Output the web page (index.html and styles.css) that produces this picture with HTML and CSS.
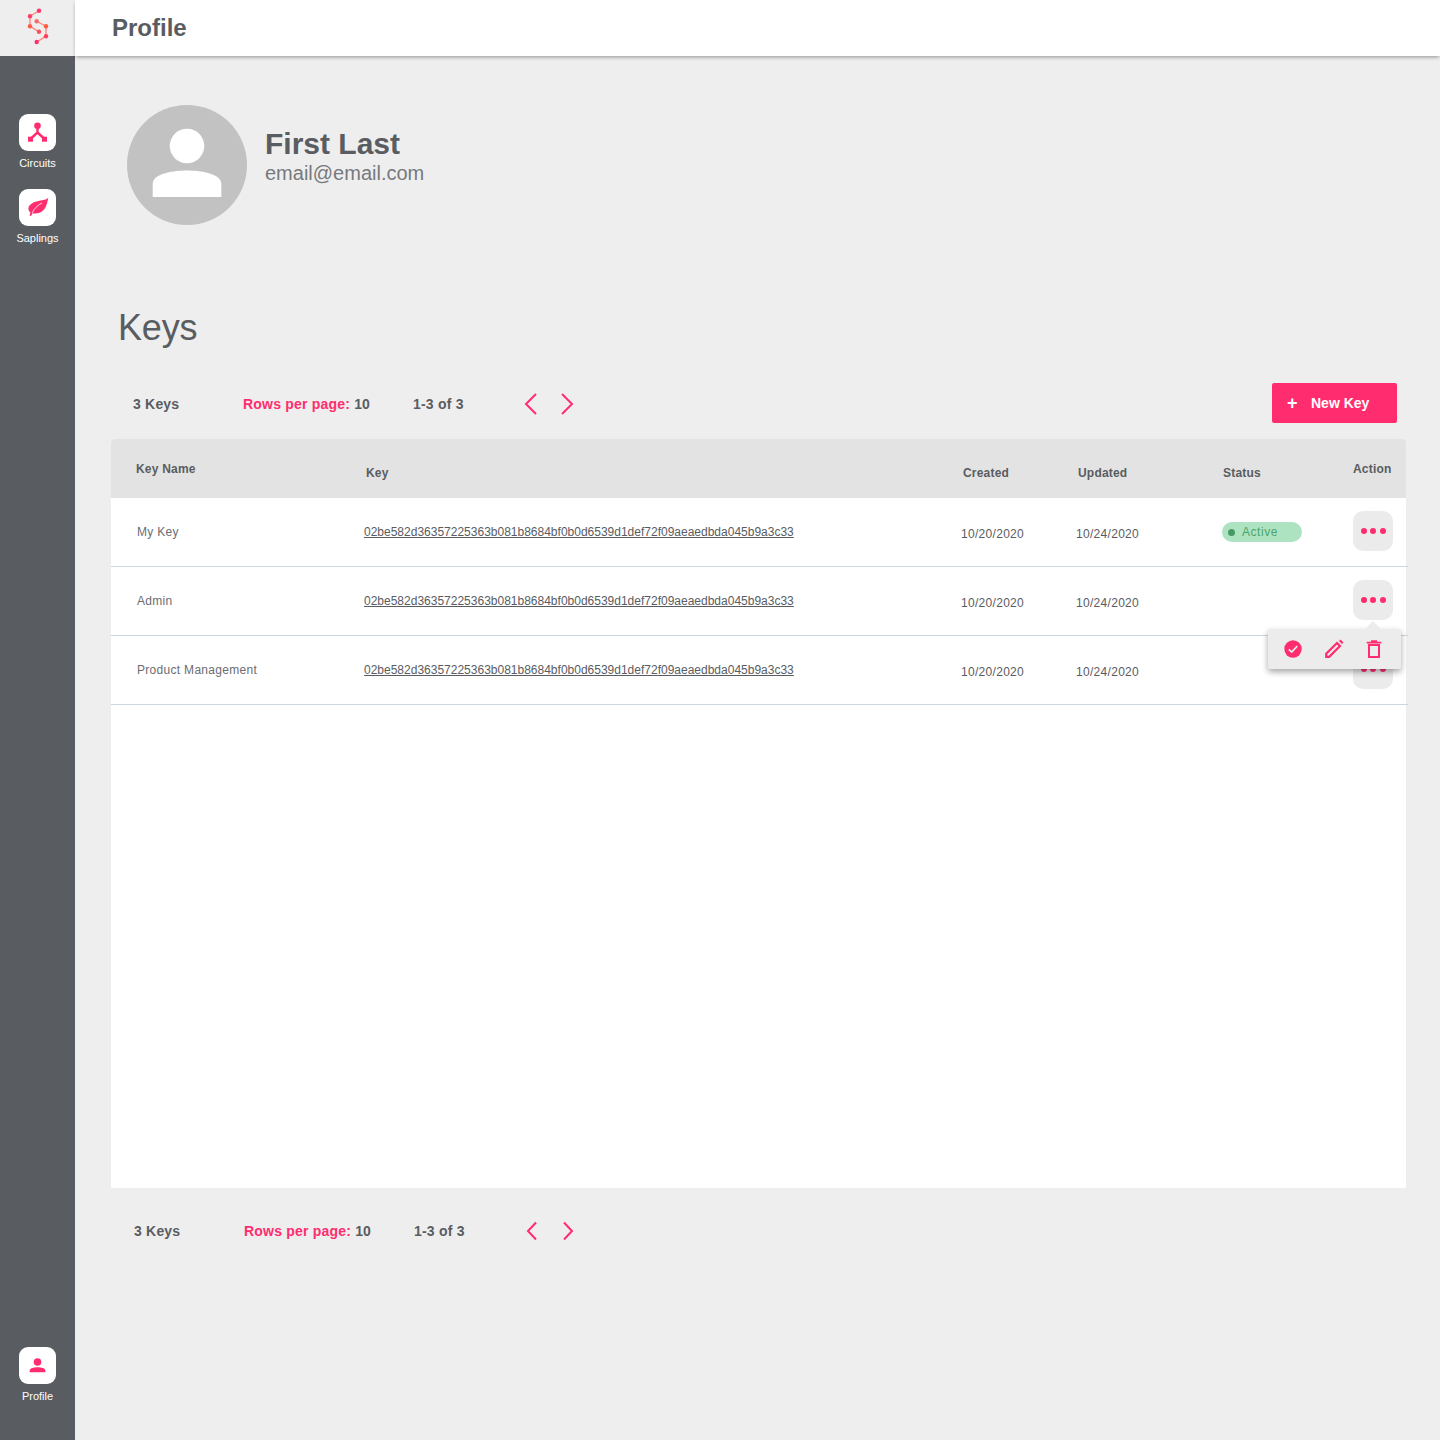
FILE: index.html
```html
<!DOCTYPE html>
<html lang="en">
<head>
<meta charset="utf-8">
<title>Profile</title>
<link rel="stylesheet" href="styles.css">
</head>
<body>
<div class="app">
  <aside class="sidebar">
    <div class="logo">
      <svg width="75" height="56" viewBox="0 0 75 56">
        <path d="M39 10.700 30 16.300v10l9 5.400M36.700 21.300l9.300 5v10l-9.300 5.700" fill="none" stroke="#ff8078" stroke-width="1.300"/>
        <circle cx="39" cy="10.700" r="2.200" fill="#ff3368"/><circle cx="30" cy="16.300" r="2.200" fill="#ff3d64"/><circle cx="30" cy="26.300" r="2.200" fill="#ff5a4a"/><circle cx="39" cy="31.700" r="2.200" fill="#ff4f55"/><circle cx="36.700" cy="21.300" r="2.200" fill="#ff6a68"/><circle cx="46" cy="26.300" r="2.200" fill="#ff5a40"/><circle cx="46" cy="36.300" r="2.200" fill="#ff4058"/><circle cx="36.700" cy="42" r="2.200" fill="#ff2d6f"/>
      </svg>
    </div>
    <nav class="nav">
      <a class="nav-item">
        <span class="nav-icon"><svg width="37" height="37" viewBox="0 0 37 37"><circle cx="18.500" cy="11.800" r="3.300"/><path d="M18.500 13v5.500L12 24.500M18.500 18.500l6.500 6" fill="none" stroke="#ff2d6f" stroke-width="2.400"/><rect x="9" y="22.700" width="5" height="5"/><rect x="23" y="22.700" width="5" height="5"/></svg></span>
        <span class="nav-label">Circuits</span>
      </a>
      <a class="nav-item">
        <span class="nav-icon"><svg width="37" height="37" viewBox="0 0 37 37"><path d="M29.300 8.700C26 12.500 15 10.500 10.500 16.500 8.500 19.300 9.500 22 11.500 23.500L10.500 26.500 12 27 13.500 24.300C17.500 25 22.500 24 25.500 20 28 16.500 28.500 12 29.300 8.700Z"/><path d="M13.300 23.800C15.500 19 19 16 23 14" fill="none" stroke="#fff" stroke-width=".8"/></svg></span>
        <span class="nav-label">Saplings</span>
      </a>
    </nav>
    <a class="nav-item nav-bottom">
      <span class="nav-icon"><svg width="37" height="37" viewBox="0 0 37 37"><circle cx="18.500" cy="15" r="3.800"/><path d="M10.700 25.300v-1.800c0-2 4-3.200 7.800-3.200s7.800 1.200 7.800 3.200v1.800Z"/></svg></span>
      <span class="nav-label">Profile</span>
    </a>
  </aside>

  <div class="body">
    <header class="topbar"><h1 class="page-title">Profile</h1></header>
    <main class="main">
      <section class="profile">
        <div class="avatar">
          <svg width="120" height="120" viewBox="0 0 120 120"><circle cx="60" cy="41" r="17.300" fill="#fff"/><path d="M25.700 92V79c0-11 22-13.500 34.300-13.500S94.300 68 94.300 79v13Z" fill="#fff"/></svg>
        </div>
        <div class="who">
          <div class="who-name">First Last</div>
          <div class="who-mail">email@email.com</div>
        </div>
      </section>

      <h2 class="section-title">Keys</h2>

      <div class="pager pager-top">
        <span class="pg-count">3 Keys</span>
        <span class="pg-rows"><b class="pink">Rows per page:</b> 10</span>
        <span class="pg-range">1-3 of 3</span>
        <span class="pg-arrows">
          <svg width="16" height="24" viewBox="0 0 16 24"><path d="M13 2 3 12l10 10" fill="none" stroke="#ff2d6f" stroke-width="2"/></svg>
          <svg width="16" height="24" viewBox="0 0 16 24"><path d="M3 2l10 10L3 22" fill="none" stroke="#ff2d6f" stroke-width="2"/></svg>
        </span>
        <button class="new-key"><span class="plus">+</span>New Key</button>
      </div>

      <div class="table">
        <div class="row head">
          <div class="th th-name raise">Key Name</div>
          <div class="th th-key">Key</div>
          <div class="th th-date">Created</div>
          <div class="th th-date">Updated</div>
          <div class="th th-status">Status</div>
          <div class="th raise">Action</div>
        </div>
        <div class="row">
          <div class="td name">My Key</div>
          <div class="td key">02be582d36357225363b081b8684bf0b0d6539d1def72f09aeaedbda045b9a3c33</div>
          <div class="td date">10/20/2020</div>
          <div class="td date">10/24/2020</div>
          <div class="td"><span class="badge"><i class="dot"></i>Active</span></div>
          <div class="td"><span class="more"><i></i><i></i><i></i></span></div>
        </div>
        <div class="row">
          <div class="td name">Admin</div>
          <div class="td key">02be582d36357225363b081b8684bf0b0d6539d1def72f09aeaedbda045b9a3c33</div>
          <div class="td date">10/20/2020</div>
          <div class="td date">10/24/2020</div>
          <div class="td"></div>
          <div class="td action-cell">
            <span class="more"><i></i><i></i><i></i></span>
            <div class="popup">
              <svg width="18" height="18" viewBox="0 0 18 18"><circle cx="9" cy="9" r="8.700" fill="#ff2d6f"/><path d="M4.800 9.300 7.700 12l5.500-5.800" fill="none" stroke="#eee" stroke-width="1.700"/></svg>
              <svg width="20" height="20" viewBox="0 0 20 20"><path d="M2.200 17.800v-3L13 4l3 3L5.200 17.800Z" fill="none" stroke="#ff2d6f" stroke-width="2.200"/><path d="m15 2 1.500-1.500 3 3L18 5Z" fill="#ff2d6f"/></svg>
              <svg width="16" height="18" viewBox="0 0 16 18"><path d="M.7 2.700h14.600M5 1h6" fill="none" stroke="#ff2d6f" stroke-width="1.700"/><path d="M3 5h10v12H3Z" fill="none" stroke="#ff2d6f" stroke-width="2"/></svg>
            </div>
          </div>
        </div>
        <div class="row">
          <div class="td name">Product Management</div>
          <div class="td key">02be582d36357225363b081b8684bf0b0d6539d1def72f09aeaedbda045b9a3c33</div>
          <div class="td date">10/20/2020</div>
          <div class="td date">10/24/2020</div>
          <div class="td"></div>
          <div class="td"><span class="more"><i></i><i></i><i></i></span></div>
        </div>
      </div>

      <div class="pager pager-bottom">
        <span class="pg-count">3 Keys</span>
        <span class="pg-rows"><b class="pink">Rows per page:</b> 10</span>
        <span class="pg-range">1-3 of 3</span>
        <span class="pg-arrows">
          <svg width="16" height="24" viewBox="0 0 16 24"><path d="M12 3.500 4 12l8 8.500" fill="none" stroke="#ff2d6f" stroke-width="2"/></svg>
          <svg width="16" height="24" viewBox="0 0 16 24"><path d="M4 3.500l8 8.500-8 8.500" fill="none" stroke="#ff2d6f" stroke-width="2"/></svg>
        </span>
      </div>
    </main>
  </div>
</div>
</body>
</html>
```
FILE: styles.css
```css
* { box-sizing: border-box; }
html, body { margin: 0; padding: 0; }
body { font-family: "Liberation Sans", Arial, sans-serif; color: #595c61; background: #eee; }
.app { display: flex; width: 1440px; height: 1440px; overflow: hidden; }

.sidebar { width: 75px; flex: none; background: #595c61; display: flex; flex-direction: column; align-items: stretch; }
.logo { height: 56px; background: #eee; }
.logo svg { display: block; }
.nav { padding-top: 58px; display: flex; flex-direction: column; gap: 19px; }
.nav-item { display: flex; flex-direction: column; align-items: center; }
.nav-bottom { margin-top: auto; margin-bottom: 37px; }
.nav-icon { width: 37px; height: 37px; background: #fff; border-radius: 9px; display: block; }
.nav-icon svg { display: block; fill: #ff2d6f; }
.nav-label { font-size: 11px; line-height: 13px; margin-top: 6px; color: #fff; }

.body { flex: 1; display: flex; flex-direction: column; min-width: 0; }
.topbar { height: 56px; flex: none; background: #fff; box-shadow: 0 2px 4px -1px rgba(0,0,0,.4); padding-left: 37px; display: flex; align-items: center; position: relative; z-index: 2; }
.page-title { margin: 0; font-size: 24px; font-weight: 700; color: #595c61; }

.main { flex: 1; padding: 49px 34px 0 36px; }
.profile { display: flex; padding-left: 16px; gap: 18px; height: 120px; }
.avatar { width: 120px; height: 120px; border-radius: 50%; background: #c2c2c2; flex: none; }
.avatar svg { display: block; }
.who { padding-top: 22px; }
.who-name { font-size: 30px; line-height: 34px; font-weight: 700; }
.who-mail { font-size: 20px; line-height: 24px; color: #77797d; }

.section-title { margin: 80px 0 0 7px; font-size: 36px; line-height: 46px; font-weight: 400; letter-spacing: -.2px; }

.pager { display: flex; align-items: center; font-size: 14px; font-weight: 700; letter-spacing: .2px; }
.pager-top { margin-top: 32px; height: 40px; }
.pager-top > span { margin-top: 2px; }
.pager-bottom { margin-top: 23px; height: 40px; padding-left: 1px; }
.pg-count { margin-left: 22px; width: 110px; }
.pg-rows { width: 170px; }
.pink { color: #ff2d6f; }
.pg-range { width: 108px; }
.pg-arrows { display: flex; gap: 20px; margin-left: 2px; }
.pg-arrows svg { display: block; }
.new-key { margin-left: auto; margin-right: 9px; width: 125px; height: 40px; border: 0; border-radius: 2px; background: #ff2d6f; color: #fff; font: 700 14px "Liberation Sans", Arial, sans-serif; display: flex; align-items: center; padding: 0 0 0 15px; }
.plus { font-size: 18px; width: 24px; text-align: left; }

.table { margin-top: 16px; height: 749px; background: #fff; border-radius: 4px 4px 2px 2px; }
.row { display: grid; grid-template-columns: 253px 597px 115px 146px 131px 1fr; height: 69px; align-items: center; width: 1297px; border-bottom: 1px solid #cdd6de; }
.head { height: 59px; background: #e3e3e3; border-bottom: 0; width: 1295px; border-radius: 4px 4px 0 0; }
.th { font-size: 12px; font-weight: 700; letter-spacing: .2px; padding-top: 8px; padding-left: 2px; }
.th.raise { padding-top: 0; padding-left: 0; }
.th-name.raise { padding-left: 25px; }
.th-status { padding-left: 1px; }
.td { font-size: 12px; letter-spacing: .3px; color: #6b6d72; }
.name { padding-left: 26px; }
.key { text-decoration: underline; letter-spacing: 0; color: #595c61; }
.date { padding-top: 3px; color: #595c61; }
.badge { display: flex; align-items: center; width: 80px; height: 20px; border-radius: 10px; background: #aee3c2; color: #4aa56c; font-size: 12px; letter-spacing: .55px; padding-left: 6px; }
.dot { width: 7px; height: 7px; border-radius: 50%; background: #459b63; margin-right: 7px; }
.more { display: flex; align-items: center; justify-content: center; gap: 3.5px; width: 40px; height: 40px; margin-top: -2px; border-radius: 10px; background: #ebebeb; }
.more i { width: 6px; height: 6px; border-radius: 50%; background: #ff2d6f; }
.action-cell { position: relative; }
.popup { position: absolute; left: -85px; top: 47px; width: 133px; height: 40px; background: #ececec; border-radius: 2px; box-shadow: 0 3px 6px rgba(0,0,0,.35); display: flex; align-items: center; padding-left: 16px; gap: 22px; z-index: 3; }
.popup::before { content: ""; position: absolute; left: 97px; top: -8px; border-left: 8px solid transparent; border-right: 8px solid transparent; border-bottom: 8px solid #ececec; }
.popup svg { display: block; flex: none; }
```
